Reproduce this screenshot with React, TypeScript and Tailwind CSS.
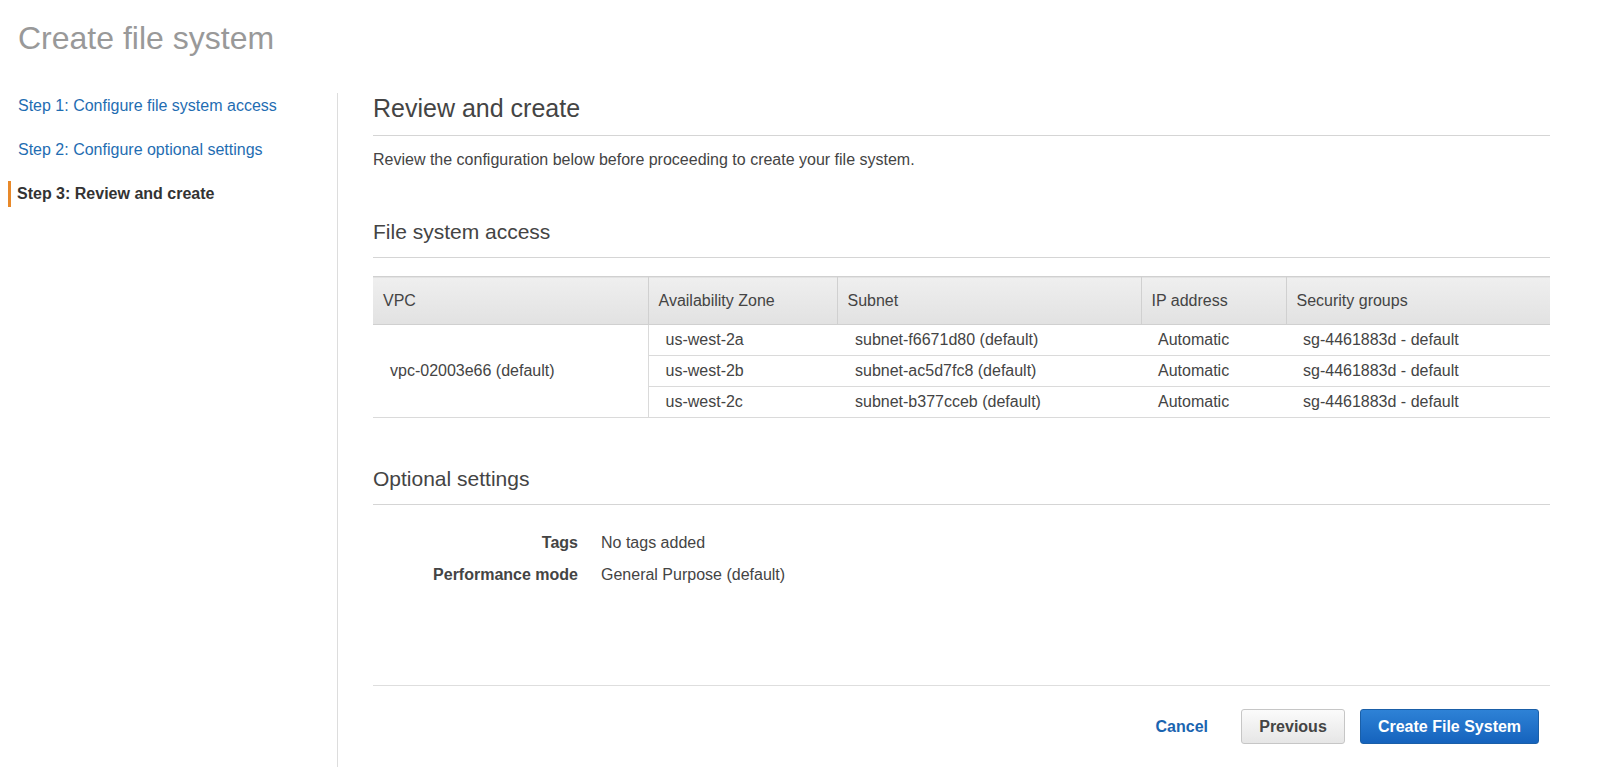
const STEPS = [
  { label: 'Step 1: Configure file system access', active: false },
  { label: 'Step 2: Configure optional settings', active: false },
  { label: 'Step 3: Review and create', active: true },
];

const MOUNTS = [
  { az: 'us-west-2a', subnet: 'subnet-f6671d80 (default)' },
  { az: 'us-west-2b', subnet: 'subnet-ac5d7fc8 (default)' },
  { az: 'us-west-2c', subnet: 'subnet-b377cceb (default)' },
];

const HEADERS = [
  { label: 'VPC', w: 'w-[275px]' },
  { label: 'Availability Zone', w: 'w-[189px]' },
  { label: 'Subnet', w: 'w-[304px]' },
  { label: 'IP address', w: 'w-[145px]' },
  { label: 'Security groups', w: '' },
];

function SectionTitle({ children }: { children: React.ReactNode }) {
  return (
    <h3 className="border-b border-[#d5d5d5] pb-[12px] text-[21px] leading-[26px] text-[#444]">
      {children}
    </h3>
  );
}

export default function App() {
  return (
    <div
      className="h-[783px] overflow-hidden bg-white text-[16px] text-[#444]"
      style={{ fontFamily: '"Liberation Sans", Arial, sans-serif' }}
    >
      <h1 className="mb-[35px] pl-[18px] pt-[18px] text-[32px] leading-[40px] text-[#999]">Create file system</h1>

      <div className="flex">
        <nav className="flex h-[674px] w-[338px] shrink-0 flex-col gap-[18px] border-r border-[#ddd]">
          {STEPS.map((s) => (
            <div
              key={s.label}
              className={
                s.active
                  ? 'ml-[8px] flex h-[26px] items-center border-l-[3px] border-[#e8892a] pl-[6px] font-bold text-[#333]'
                  : 'ml-[8px] flex h-[26px] items-center border-l-[3px] border-transparent pl-[7px] text-[#1f6db2]'
              }
            >
              {s.label}
            </div>
          ))}
        </nav>

        <main className="flex-1 pl-[35px] pr-[50px]">
          <h2 className="border-b border-[#d5d5d5] pb-[12px] text-[25px] leading-[30px] text-[#444]">Review and create</h2>
          <p className="mt-[14px] leading-[20px]">
            Review the configuration below before proceeding to create your file system.
          </p>

          <div className="mt-[49px]">
            <SectionTitle>File system access</SectionTitle>
          </div>

          <table className="mt-[18px] w-full border-collapse text-left">
            <thead>
              <tr className="h-[48px] border-y border-[#d0d0d0] bg-gradient-to-b from-[#efefef] to-[#e2e2e2]">
                {HEADERS.map((h, i) => (
                  <th
                    key={h.label}
                    className={`${h.w} px-[10px] font-normal ${i < HEADERS.length - 1 ? 'border-r border-[#d0d0d0]' : ''}`}
                  >
                    {h.label}
                  </th>
                ))}
              </tr>
            </thead>
            <tbody>
              {MOUNTS.map((m, i) => (
                <tr key={m.az} className="h-[31px] border-b border-[#dadada]">
                  {i === 0 && (
                    <td rowSpan={3} className="border-r border-[#dadada] pl-[17px]">
                      vpc-02003e66 (default)
                    </td>
                  )}
                  <td className="pl-[17px]">{m.az}</td>
                  <td className="pl-[18px]">{m.subnet}</td>
                  <td className="pl-[17px]">Automatic</td>
                  <td className="pl-[17px]">sg-4461883d - default</td>
                </tr>
              ))}
            </tbody>
          </table>

          <div className="mt-[48px]">
            <SectionTitle>Optional settings</SectionTitle>
          </div>

          <dl className="mt-[28px] grid grid-cols-[205px_1fr] gap-x-[23px] gap-y-[12px] leading-[20px]">
            <dt className="text-right font-bold text-[#444]">Tags</dt>
            <dd>No tags added</dd>
            <dt className="text-right font-bold text-[#444]">Performance mode</dt>
            <dd>General Purpose (default)</dd>
          </dl>

          <div className="mt-[100px] flex items-center justify-end border-t border-[#dedede] pr-[11px] pt-[23px]">
            <button className="mr-[33px] font-bold text-[#1a64b0]">Cancel</button>
            <button className="mr-[15px] h-[35px] w-[104px] rounded-[3px] border border-[#c6c6c6] bg-gradient-to-b from-[#fbfbfb] to-[#e6e6e6] font-bold text-[#444]">
              Previous
            </button>
            <button className="h-[35px] w-[179px] rounded-[3px] border border-[#1a5fa8] bg-gradient-to-b from-[#2e82d6] to-[#1563bd] font-bold text-white">
              Create File System
            </button>
          </div>
        </main>
      </div>
    </div>
  );
}
